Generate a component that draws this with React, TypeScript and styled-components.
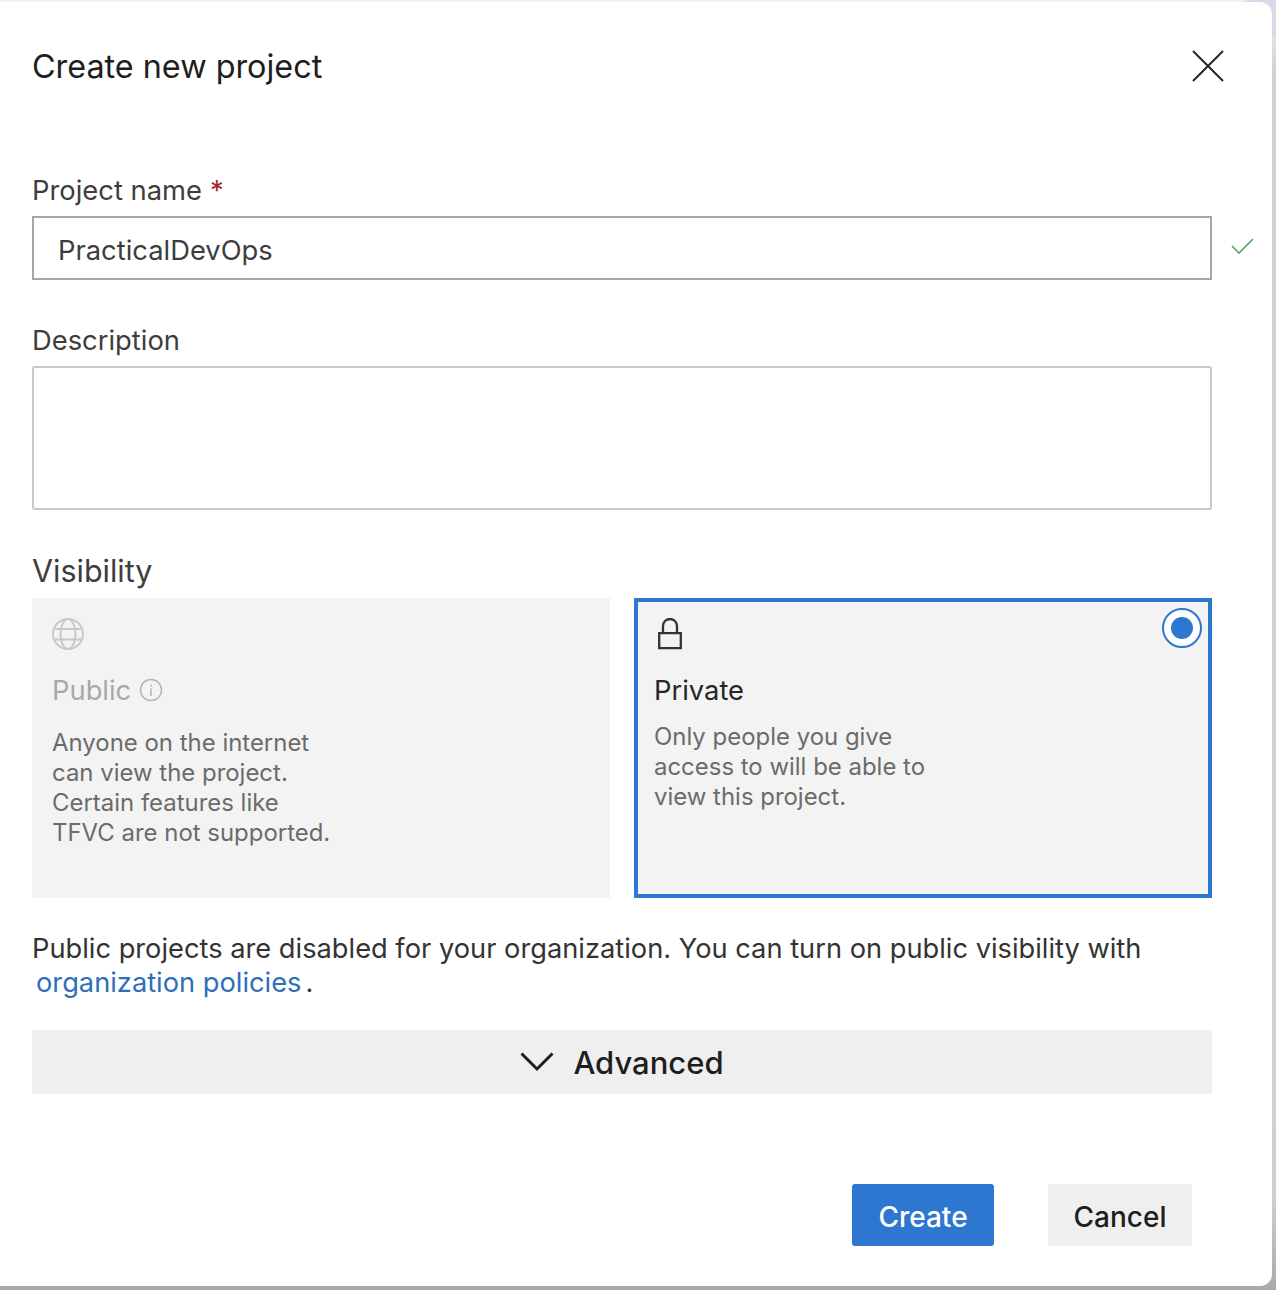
import React from 'react';
import styled, { createGlobalStyle } from 'styled-components';

const GlobalStyle = createGlobalStyle`
    html, body {
        margin: 0;
        padding: 0;
        background: #cfcfcf;
    }
    body {
        font-family: Inter, "Liberation Sans", sans-serif;
        color: #1f1f1f;
    }
`;

const Page = styled.div`
    width: 1276px;
    height: 1290px;
    box-sizing: border-box;
    padding: 2px 4px 4px 0;
    background: linear-gradient(180deg, #f2f2f2 0, #f2f2f2 2px, #d2d2d2 70px, #cfcfcf 1200px, #a9a9a9 1290px);
    overflow: hidden;
    position: relative;
`;

const Corner = styled.div`
    position: absolute;
    top: 0;
    right: 0;
    width: 38px;
    height: 36px;
    background: #dcd6e8;
    border-radius: 12px 0 0 0;
`;

const Dialog = styled.div`
    position: relative;
    width: 1272px;
    height: 1284px;
    box-sizing: border-box;
    background: #fff;
    border-radius: 0 12px 12px 0;
    padding: 0 64px 0 32px;
    display: flex;
    flex-direction: column;
`;

const Header = styled.div`
    display: flex;
    justify-content: space-between;
    align-items: center;
    height: 128px;
    box-sizing: border-box;
    margin-right: -16px;
`;

const Title = styled.h1`
    margin: 0;
    font-size: 32.35px;
    font-weight: 400;
    color: #1e1e1e;
`;

const CloseButton = styled.button`
    border: 0;
    padding: 0;
    background: none;
    width: 32px;
    height: 32px;
    display: flex;
`;

const Label = styled.div<{ $large?: boolean }>`
    font-size: ${p => (p.$large ? '30.5px' : '27.35px')};
    line-height: 38px;
    color: #3d3d3d;
    margin-top: 42px;
    height: 36px;
`;

const Required = styled.span`
    color: #a4262c;
    margin-left: 8px;
`;

const InputRow = styled.div`
    display: flex;
    align-items: flex-start;
    gap: 19px;
    margin-top: 8px;
    width: 1224px;
`;

const NameInput = styled.div`
    width: 1180px;
    flex: none;
    height: 64px;
    box-sizing: border-box;
    border: 2px solid #a6a6a6;
    padding: 4px 24px 0;
    display: flex;
    align-items: center;
    font-size: 27.35px;
    color: #3d3d3d;
`;

const CheckIcon = styled.svg`
    flex: none;
    margin-top: 22px;
`;

const Textarea = styled.div`
    width: 1180px;
    height: 144px;
    flex: none;
    box-sizing: border-box;
    border: 2px solid #c8c8c8;
    border-radius: 3px;
    margin-top: 8px;
`;

const Cards = styled.div`
    display: grid;
    grid-template-columns: 578px 578px;
    gap: 24px;
    width: 1180px;
    margin-top: 10px;
`;

const Card = styled.div<{ $selected?: boolean }>`
    position: relative;
    height: 300px;
    box-sizing: border-box;
    background: #f3f3f3;
    padding: ${p => (p.$selected ? '16px' : '20px')};
    border: ${p => (p.$selected ? '4px solid #2e77d0' : 'none')};
`;

const CardIcon = styled.div`
    height: 32px;
    display: flex;
`;

const CardTitle = styled.div<{ $disabled?: boolean }>`
    display: flex;
    align-items: center;
    gap: 8px;
    height: 40px;
    margin-top: 20px;
    font-size: 27.35px;
    color: ${p => (p.$disabled ? '#a8a8a8' : '#262626')};
`;

const CardText = styled.div<{ $tight?: boolean }>`
    margin-top: ${p => (p.$tight ? '12px' : '18px')};
    font-size: 23.95px;
    line-height: 30px;
    color: #6b6b6b;
    white-space: pre-line;
`;

const Radio = styled.div`
    position: absolute;
    top: 6px;
    right: 6px;
    width: 40px;
    height: 40px;
    box-sizing: border-box;
    border: 2px solid #2e77d0;
    border-radius: 50%;
    background: #fff;
    display: flex;
    align-items: center;
    justify-content: center;
`;

const RadioDot = styled.div`
    width: 22px;
    height: 22px;
    border-radius: 50%;
    background: #2e77d0;
`;

const Notice = styled.div`
    margin-top: 34px;
    font-size: 27.25px;
    line-height: 34px;
    color: #333;
`;

const NoticeLink = styled.a`
    color: #2e6fb8;
    margin: 0 4px;
`;

const Advanced = styled.div`
    width: 1180px;
    height: 64px;
    flex: none;
    margin-top: 30px;
    background: #efefef;
    border-radius: 3px;
    display: flex;
    align-items: center;
    justify-content: center;
    gap: 19px;
    font-size: 31px;
    font-weight: 500;
    color: #1e1e1e;
`;

const Footer = styled.div`
    display: flex;
    justify-content: flex-end;
    gap: 54px;
    width: 1160px;
    margin-top: 90px;
`;

const Button = styled.button<{ $primary?: boolean }>`
    height: 62px;
    padding: 3px 0 0;
    width: ${p => (p.$primary ? '142px' : '144px')};
    border: 0;
    border-radius: 3px;
    font-family: inherit;
    font-size: 28px;
    font-weight: 500;
    background: ${p => (p.$primary ? '#2e77d0' : '#efefef')};
    color: ${p => (p.$primary ? '#fff' : '#1e1e1e')};
`;

const App = () => (
    <Page>
        <GlobalStyle />
        <Corner />
        <Dialog>
            <Header>
                <Title>Create new project</Title>
                <CloseButton aria-label="Close">
                    <svg width="32" height="32" viewBox="0 0 32 32" fill="none" stroke="#262626" strokeWidth="2">
                        <path d="M1 1L31 31M31 1L1 31" />
                    </svg>
                </CloseButton>
            </Header>
            <Label>
                Project name<Required>*</Required>
            </Label>
            <InputRow>
                <NameInput>PracticalDevOps</NameInput>
                <CheckIcon width="23" height="16" viewBox="0 0 23 16" fill="none" stroke="#55a362" strokeWidth="1.6">
                    <path d="M1 8L8 15L22 1" />
                </CheckIcon>
            </InputRow>
            <Label>Description</Label>
            <Textarea />
            <Label $large>Visibility</Label>
            <Cards>
                <Card>
                    <CardIcon>
                        <svg width="32" height="32" viewBox="0 0 32 32" fill="none" stroke="#c8c8c8" strokeWidth="2">
                            <circle cx="16" cy="16" r="15" />
                            <ellipse cx="16" cy="16" rx="7.5" ry="15" />
                            <path d="M3 11H29M3 21.5H29" />
                        </svg>
                    </CardIcon>
                    <CardTitle $disabled>
                        Public
                        <svg width="24" height="24" viewBox="0 0 24 24" fill="none" stroke="#b4b4b4" strokeWidth="1.5">
                            <circle cx="12" cy="12" r="10.5" />
                            <path d="M12 10.5V18M12 6.5V8.5" />
                        </svg>
                    </CardTitle>
                    <CardText>{'Anyone on the internet\ncan view the project.\nCertain features like\nTFVC are not supported.'}</CardText>
                </Card>
                <Card $selected>
                    <CardIcon>
                        <svg width="32" height="32" viewBox="0 0 32 32" fill="none" stroke="#333" strokeWidth="2.3">
                            <path d="M5.2 15.2H26.8V30.2H5.2ZM9 15V8A7 7 0 0 1 23 8V15" />
                        </svg>
                    </CardIcon>
                    <CardTitle>Private</CardTitle>
                    <CardText $tight>{'Only people you give\naccess to will be able to\nview this project.'}</CardText>
                    <Radio>
                        <RadioDot />
                    </Radio>
                </Card>
            </Cards>
            <Notice>
                Public projects are disabled for your organization. You can turn on public visibility with
                <br />
                <NoticeLink>organization policies</NoticeLink>.
            </Notice>
            <Advanced>
                <svg width="34" height="20" viewBox="0 0 34 20" fill="none" stroke="#1e1e1e" strokeWidth="3">
                    <path d="M1.5 1.5L17 17L32.5 1.5" />
                </svg>
                Advanced
            </Advanced>
            <Footer>
                <Button $primary>Create</Button>
                <Button>Cancel</Button>
            </Footer>
        </Dialog>
    </Page>
);

export default App;
